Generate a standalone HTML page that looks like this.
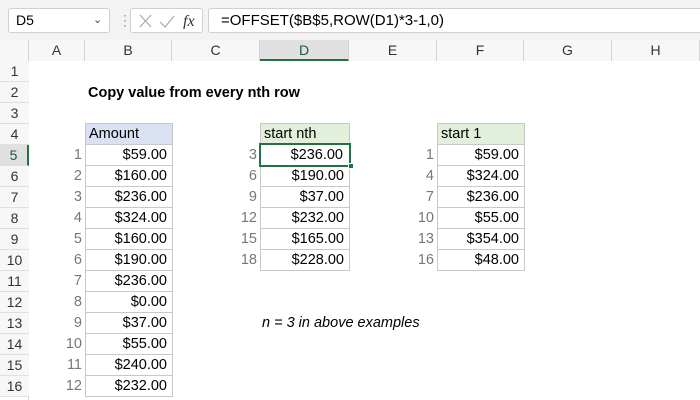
<!DOCTYPE html><html><head><style>
body{margin:0;width:700px;height:400px;overflow:hidden;background:#fff;font-family:"Liberation Sans",Arial,sans-serif;position:relative}
div{position:absolute;box-sizing:border-box}
.t{font-size:14.5px;line-height:21px;white-space:nowrap}
.ch{top:40px;height:21px;font-size:14px;line-height:21px;text-align:center;color:#333;border-right:1px solid #d4d4d4;background:#f7f7f7}
.rh{left:0;width:29px;height:21px;font-size:14px;line-height:21px;text-align:center;color:#333;background:#f7f7f7;border-bottom:1px solid #e0e0e0}
.c{height:22px;border:1px solid #c8c8c8;font-size:14.5px;line-height:20px;text-align:right;padding-right:5px}
.i{font-size:14.5px;line-height:21px;text-align:right;color:#777;width:30px}
</style></head><body>
<div style="left:0;top:0;width:700px;height:40px;background:#f3f3f3"></div>
<div style="left:8px;top:8px;width:102px;height:25px;background:#fff;border:1px solid #d0d0d0;border-radius:3px;font-size:14px;line-height:23px;padding-left:7px">D5<span style="position:absolute;left:84px;top:0;font-size:11px;color:#444">&#8964;</span></div>
<div style="left:118px;top:12px;color:#999;font-size:14px;line-height:16px">&#8942;</div>
<div style="left:130px;top:8px;width:73px;height:25px;background:#fff;border:1px solid #d0d0d0;border-radius:3px"></div>
<svg style="position:absolute;left:138px;top:13px" width="60" height="16"><path d="M2 2L13 14M13 2L2 14" stroke="#aaa" stroke-width="1.2"/><path d="M22 9L27 14L36 3" stroke="#aaa" stroke-width="1.2" fill="none"/><text x="45" y="13" font-family="Liberation Serif" font-style="italic" font-size="16" fill="#333">fx</text></svg>
<div style="left:208px;top:8px;width:500px;height:25px;background:#fff;border:1px solid #d0d0d0;border-radius:3px;font-size:15px;line-height:23px;padding-left:12px">=OFFSET($B$5,ROW(D1)*3-1,0)</div>
<div style="left:0;top:40px;width:700px;height:21px;background:#f7f7f7;border-bottom:1px solid #d4d4d4"></div>
<div class="ch" style="left:0;width:29px"></div>
<div class="ch" style="left:29px;width:56px">A</div>
<div class="ch" style="left:85px;width:87px">B</div>
<div class="ch" style="left:172px;width:88px">C</div>
<div class="ch" style="left:260px;width:89px;background:#e0e0e0;border-bottom:2px solid #217346;color:#185c37">D</div>
<div class="ch" style="left:349px;width:88px">E</div>
<div class="ch" style="left:437px;width:87px">F</div>
<div class="ch" style="left:524px;width:88px">G</div>
<div class="ch" style="left:612px;width:88px">H</div>
<div style="left:28px;top:61px;width:1px;height:339px;background:#d4d4d4"></div>
<div class="rh" style="top:61px">1</div><div class="rh" style="top:82px">2</div><div class="rh" style="top:103px">3</div><div class="rh" style="top:124px">4</div>
<div class="rh" style="top:145px;background:#e0e0e0;border-right:2px solid #217346;color:#185c37">5</div>
<div class="rh" style="top:166px">6</div><div class="rh" style="top:187px">7</div><div class="rh" style="top:208px">8</div><div class="rh" style="top:229px">9</div><div class="rh" style="top:250px">10</div><div class="rh" style="top:271px">11</div><div class="rh" style="top:292px">12</div><div class="rh" style="top:313px">13</div><div class="rh" style="top:334px">14</div><div class="rh" style="top:355px">15</div><div class="rh" style="top:376px">16</div>
<div class="t" style="left:88px;top:83px;font-weight:bold">Copy value from every nth row</div>
<div class="c" style="left:85px;top:123px;width:88px;background:#d9e1f2;text-align:left;padding-left:3px">Amount</div>
<div class="c" style="left:260px;top:123px;width:90px;background:#e2efda;text-align:left;padding-left:3px">start nth</div>
<div class="c" style="left:437px;top:123px;width:88px;background:#e2efda;text-align:left;padding-left:3px">start 1</div>
<div class="c" style="left:85px;top:144px;width:88px">$59.00</div><div class="i" style="left:52px;top:145px">1</div>
<div class="c" style="left:85px;top:165px;width:88px">$160.00</div><div class="i" style="left:52px;top:166px">2</div>
<div class="c" style="left:85px;top:186px;width:88px">$236.00</div><div class="i" style="left:52px;top:187px">3</div>
<div class="c" style="left:85px;top:207px;width:88px">$324.00</div><div class="i" style="left:52px;top:208px">4</div>
<div class="c" style="left:85px;top:228px;width:88px">$160.00</div><div class="i" style="left:52px;top:229px">5</div>
<div class="c" style="left:85px;top:249px;width:88px">$190.00</div><div class="i" style="left:52px;top:250px">6</div>
<div class="c" style="left:85px;top:270px;width:88px">$236.00</div><div class="i" style="left:52px;top:271px">7</div>
<div class="c" style="left:85px;top:291px;width:88px">$0.00</div><div class="i" style="left:52px;top:292px">8</div>
<div class="c" style="left:85px;top:312px;width:88px">$37.00</div><div class="i" style="left:52px;top:313px">9</div>
<div class="c" style="left:85px;top:333px;width:88px">$55.00</div><div class="i" style="left:52px;top:334px">10</div>
<div class="c" style="left:85px;top:354px;width:88px">$240.00</div><div class="i" style="left:52px;top:355px">11</div>
<div class="c" style="left:85px;top:375px;width:88px">$232.00</div><div class="i" style="left:52px;top:376px">12</div>
<div class="c" style="left:260px;top:165px;width:90px">$190.00</div><div class="i" style="left:227px;top:166px">6</div>
<div class="c" style="left:260px;top:186px;width:90px">$37.00</div><div class="i" style="left:227px;top:187px">9</div>
<div class="c" style="left:260px;top:207px;width:90px">$232.00</div><div class="i" style="left:227px;top:208px">12</div>
<div class="c" style="left:260px;top:228px;width:90px">$165.00</div><div class="i" style="left:227px;top:229px">15</div>
<div class="c" style="left:260px;top:249px;width:90px">$228.00</div><div class="i" style="left:227px;top:250px">18</div>
<div class="c" style="left:259px;top:143px;width:92px;height:24px;border:2px solid #217346;line-height:20px;padding-right:6px">$236.00</div><div class="i" style="left:227px;top:145px">3</div>
<div style="left:348px;top:163px;width:6px;height:6px;background:#217346;border:1px solid #fff"></div>
<div class="c" style="left:437px;top:144px;width:88px">$59.00</div><div class="i" style="left:404px;top:145px">1</div>
<div class="c" style="left:437px;top:165px;width:88px">$324.00</div><div class="i" style="left:404px;top:166px">4</div>
<div class="c" style="left:437px;top:186px;width:88px">$236.00</div><div class="i" style="left:404px;top:187px">7</div>
<div class="c" style="left:437px;top:207px;width:88px">$55.00</div><div class="i" style="left:404px;top:208px">10</div>
<div class="c" style="left:437px;top:228px;width:88px">$354.00</div><div class="i" style="left:404px;top:229px">13</div>
<div class="c" style="left:437px;top:249px;width:88px">$48.00</div><div class="i" style="left:404px;top:250px">16</div>
<div class="t" style="left:262px;top:313px;font-style:italic">n = 3 in above examples</div>
</body></html>
